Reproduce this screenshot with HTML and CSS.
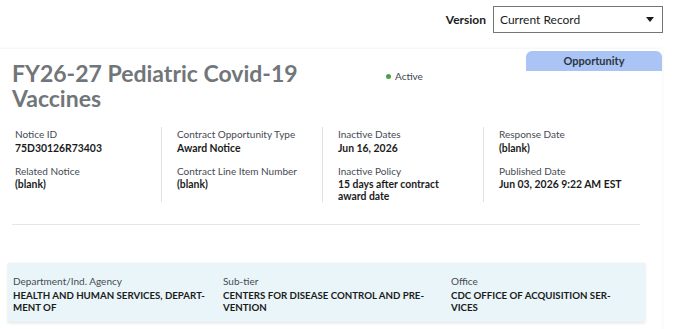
FILE: index.html
```html
<!DOCTYPE html>
<html>
	<head>
		<meta charset="UTF-8">
		<title>FY26-27 Pediatric Covid-19 Vaccines</title>
		<link rel="stylesheet" href="styles.css">
	</head>
	<body>
		<div class="topbar">
			<label class="ver-label">Version</label>
			<div class="ver-select">
				<span>Current Record</span>
				<i class="caret"></i>
			</div>
		</div>
		<div class="card">
			<div class="head">
				<h1 class="title">FY26-27 Pediatric Covid-19 Vaccines</h1>
				<div class="status"><i class="dot"></i>Active</div>
				<div class="tab">Opportunity</div>
			</div>
			<div class="facts">
				<div class="col">
					<p class="lbl">Notice ID</p>
					<p class="val">75D30126R73403</p>
					<p class="lbl">Related Notice</p>
					<p class="val">(blank)</p>
				</div>
				<div class="col">
					<p class="lbl">Contract Opportunity Type</p>
					<p class="val">Award Notice</p>
					<p class="lbl">Contract Line Item Number</p>
					<p class="val">(blank)</p>
				</div>
				<div class="col">
					<p class="lbl">Inactive Dates</p>
					<p class="val">Jun 16, 2026</p>
					<p class="lbl">Inactive Policy</p>
					<p class="val">15 days after contract<br>award date</p>
				</div>
				<div class="col">
					<p class="lbl">Response Date</p>
					<p class="val">(blank)</p>
					<p class="lbl">Published Date</p>
					<p class="val">Jun 03, 2026 9:22 AM EST</p>
				</div>
			</div>
			<hr class="rule">
			<div class="agency">
				<div class="acol">
					<p class="lbl">Department/Ind. Agency</p>
					<p class="val up">HEALTH AND HUMAN SERVICES, DEPART-<br>MENT OF</p>
				</div>
				<div class="acol">
					<p class="lbl">Sub-tier</p>
					<p class="val up">CENTERS FOR DISEASE CONTROL AND PRE-<br>VENTION</p>
				</div>
				<div class="acol">
					<p class="lbl">Office</p>
					<p class="val up">CDC OFFICE OF ACQUISITION SER-<br>VICES</p>
				</div>
			</div>
		</div>
	</body>
</html>
```

FILE: styles.css
```css
*{margin: 0;padding: 0;box-sizing: border-box;}
body{font-family: Lato, "Open Sans", sans-serif;color: #1b1b1b;background: #fff;width: 680px;height: 329px;overflow: hidden;}

.topbar{display: flex;justify-content: flex-end;align-items: center;height: 40px;padding: 6px 17px 7px 0;}
.ver-label{font-size: 12px;font-weight: bold;margin-right: 7px;}
.ver-select{width: 170px;height: 27px;border: 1px solid #71767a;display: flex;align-items: center;justify-content: space-between;padding: 0 8px 0 6px;font-size: 12px;}
.caret{width: 0;height: 0;border-left: 4px solid transparent;border-right: 4px solid transparent;border-top: 5px solid #1b1b1b;}

.card{width: 662px;margin-top: 9px;height: 290px;box-shadow: 0 0 3px rgba(0,0,0,.08);}
.head{display: flex;align-items: flex-start;padding-left: 12px;height: 70px;}
.title{flex: 0 0 374px;padding-right: 74px;font-size: 23px;line-height: 25px;color: #71767a;margin-top: 12px;}
.status{display: flex;align-items: center;font-size: 10px;margin-top: 21px;color: #3d4551;}
.dot{width: 5px;height: 5px;border-radius: 50%;background: #4aa14a;margin-right: 4px;}
.tab{margin-left: auto;margin-top: 2px;width: 136px;height: 20px;background: #a9c4f5;border-radius: 6px 6px 0 0;text-align: center;font-size: 11px;font-weight: bold;line-height: 20px;color: #2c3440;}

.facts{display: flex;padding: 8px 0 0 0;}
.col{flex: 0 0 161px;padding: 0 0 0 15px;border-left: 1px solid #dfe1e2;min-height: 74px;}
.col:first-child{border-left: 0;}
.col:last-child{flex-basis: 170px;}
.lbl{font-size: 10px;line-height: 14px;color: #454a52;white-space: nowrap;}
.val{font-size: 10.4px;line-height: 14px;font-weight: bold;margin-bottom: 9px;white-space: nowrap;}
.col .val:last-child{margin-bottom: 0;line-height: 12px;}

.rule{border: 0;border-top: 1px solid #e6e6e6;margin: 22px 22px 0 12px;}

.agency{display: flex;margin: 38px 17px 0 8px;height: 59px;background: #e9f5f8;box-shadow: 0 1px 3px rgba(0,0,0,.12);padding: 12px 0 0 5px;}
.acol{flex: 0 0 210px;}
.acol:nth-child(2){flex-basis: 228px;}
.acol .lbl{line-height: 13px;}
.up{font-size: 9.7px;line-height: 12px;margin: 1px 0 0 0;}
```
